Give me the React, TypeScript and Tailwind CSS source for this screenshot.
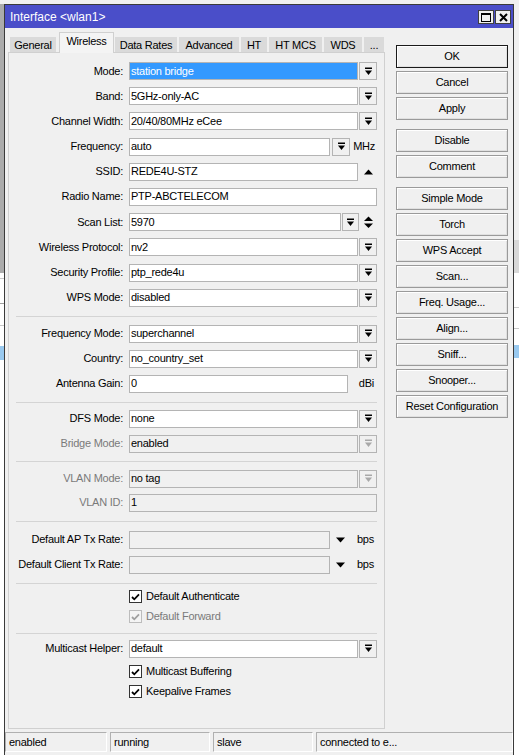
import React from 'react';

type Kind = 'select' | 'text' | 'freq' | 'ssid' | 'scan' | 'gain' | 'rate';

interface Field {
  label: string;
  value: string;
  kind: Kind;
  disabled?: boolean;
  selected?: boolean;
  mt?: string;
}

function DropIcon({ disabled }: { disabled?: boolean }) {
  const c = disabled ? '#a8a8a8' : '#000000';
  return (
    <svg width="9" height="9" viewBox="0 0 9 9">
      <rect x="1" y="0.5" width="7" height="1.5" fill={c} />
      <path d="M1 3.5h7L4.5 8z" fill={c} />
    </svg>
  );
}

function DropButton({ disabled, w = 'w-[18px]' }: { disabled?: boolean; w?: string }) {
  return (
    <div className={`${w} flex h-full shrink-0 items-center justify-center border border-[#b4b4b4] bg-[#f0f0f0]`}>
      <DropIcon disabled={disabled} />
    </div>
  );
}

function Input({ value, w, disabled, selected }: { value: string; w: string; disabled?: boolean; selected?: boolean }) {
  return (
    <div className={`${w} flex h-full shrink-0 border border-[#b4b4b4] ${disabled ? 'bg-[#f0f0f0]' : 'bg-white'}`}>
      <div className={`flex flex-1 items-center pl-[1px] ${selected ? 'bg-[#3399ff] text-white' : 'text-black'}`}>
        {value}
      </div>
    </div>
  );
}

function Label({ text, disabled }: { text: string; disabled?: boolean }) {
  return (
    <div className={`w-[114px] shrink-0 text-right ${disabled ? 'text-[#7a7a7a]' : 'text-black'}`}>
      {text}
    </div>
  );
}

function Row({ f }: { f: Field }) {
  let body: React.ReactNode;
  switch (f.kind) {
    case 'select':
      body = (
        <>
          <Input value={f.value} w="w-[229px]" disabled={f.disabled} selected={f.selected} />
          <div className="ml-[1px]" />
          <DropButton disabled={f.disabled} />
        </>
      );
      break;
    case 'text':
      body = <Input value={f.value} w="w-[248px]" disabled={f.disabled} />;
      break;
    case 'freq':
      body = (
        <>
          <Input value={f.value} w="w-[201px]" />
          <div className="ml-[2px]" />
          <DropButton />
          <div className="flex-1 pr-[2px] text-right">MHz</div>
        </>
      );
      break;
    case 'ssid':
      body = (
        <>
          <Input value={f.value} w="w-[229px]" />
          <div className="flex flex-1 items-center justify-center pl-[1px]">
            <svg width="9" height="6" viewBox="0 0 9 6">
              <path d="M0 5.5h9L4.5 0.5z" fill="#000" />
            </svg>
          </div>
        </>
      );
      break;
    case 'scan':
      body = (
        <>
          <Input value={f.value} w="w-[212px]" />
          <div className="ml-[1px]" />
          <DropButton w="w-[17px]" />
          <div className="flex flex-1 items-center justify-center pl-[1px]">
            <svg width="9" height="13" viewBox="0 0 9 13">
              <path d="M0 5h9L4.5 0.5z" fill="#000" />
              <path d="M0 7.5h9L4.5 12z" fill="#000" />
            </svg>
          </div>
        </>
      );
      break;
    case 'gain':
      body = (
        <>
          <Input value={f.value} w="w-[219px]" />
          <div className="flex-1 pr-[3px] text-right">dBi</div>
        </>
      );
      break;
    case 'rate':
      body = (
        <>
          <Input value={f.value} w="w-[201px]" disabled />
          <div className="flex w-[20px] items-center justify-center">
            <svg width="9" height="6" viewBox="0 0 9 6">
              <path d="M0 0.5h9L4.5 5.5z" fill="#000" />
            </svg>
          </div>
          <div className="flex-1 pr-[3px] text-right">bps</div>
        </>
      );
      break;
  }
  return (
    <div className={`flex h-[18px] items-center ${f.mt ?? ''}`}>
      <Label text={f.label} disabled={f.disabled} />
      <div className="ml-[6px] flex h-full w-[248px] items-center">{body}</div>
    </div>
  );
}

function Check({ label, disabled, mt }: { label: string; disabled?: boolean; mt: string }) {
  return (
    <div className={`flex h-[18px] items-center pl-[120px] ${mt}`}>
      <div
        className={`flex h-[13px] w-[13px] items-center justify-center border ${
          disabled ? 'border-[#bcbcbc] bg-[#f4f4f4]' : 'border-[#333333] bg-white'
        }`}
      >
        <svg width="9" height="8" viewBox="0 0 9 8">
          <path d="M1 4l2.3 2.3L8 1.3" fill="none" stroke={disabled ? '#a0a0a0' : '#000'} strokeWidth="1.8" />
        </svg>
      </div>
      <span className={`ml-[4px] ${disabled ? 'text-[#7a7a7a]' : 'text-black'}`}>{label}</span>
    </div>
  );
}

function Divider({ mt }: { mt: string }) {
  return <div className={`mx-[7px] h-px shrink-0 bg-[#d4d4d4] ${mt}`} />;
}

const section1: Field[] = [
  { label: 'Mode:', value: 'station bridge', kind: 'select', selected: true },
  { label: 'Band:', value: '5GHz-only-AC', kind: 'select' },
  { label: 'Channel Width:', value: '20/40/80MHz eCee', kind: 'select' },
  { label: 'Frequency:', value: 'auto', kind: 'freq' },
  { label: 'SSID:', value: 'REDE4U-STZ', kind: 'ssid' },
  { label: 'Radio Name:', value: 'PTP-ABCTELECOM', kind: 'text' },
  { label: 'Scan List:', value: '5970', kind: 'scan' },
  { label: 'Wireless Protocol:', value: 'nv2', kind: 'select' },
  { label: 'Security Profile:', value: 'ptp_rede4u', kind: 'select' },
  { label: 'WPS Mode:', value: 'disabled', kind: 'select' },
];

const tabs = ['General', 'Wireless', 'Data Rates', 'Advanced', 'HT', 'HT MCS', 'WDS', '...'];
const tabWidths = ['w-[46px]', 'w-[55px]', 'w-[62px]', 'w-[60px]', 'w-[26px]', 'w-[53px]', 'w-[38px]', 'w-[20px]'];

const buttonGroups = [
  ['OK', 'Cancel', 'Apply'],
  ['Disable', 'Comment'],
  ['Simple Mode', 'Torch', 'WPS Accept', 'Scan...', 'Freq. Usage...', 'Align...', 'Sniff...', 'Snooper...', 'Reset Configuration'],
];

const statusCells = [
  { text: 'enabled', w: 'w-[102px]' },
  { text: 'running', w: 'w-[100px]' },
  { text: 'slave', w: 'w-[100px]' },
  { text: 'connected to e...', w: 'w-[197px]' },
];

export default function App() {
  return (
    <div className="flex h-[755px] w-[519px] overflow-hidden bg-[#f0f0f0] font-['Liberation_Sans',Arial,sans-serif] text-[11px] leading-none tracking-[-0.25px] text-black">
      {/* window behind, left edge */}
      <div className="flex w-[4px] shrink-0 flex-col">
        <div className="h-[4px] bg-[#f0f0f0]" />
        <div className="h-[269px] bg-[#ababab]" />
        <div className="h-[5px] bg-white" />
        <div className="h-px bg-[#c8c8c8]" />
        <div className="h-[24px] bg-white" />
        <div className="h-px bg-[#a0a0a0]" />
        <div className="h-[21px] bg-white" />
        <div className="h-px bg-[#c8c8c8]" />
        <div className="h-[20px] bg-white" />
        <div className="h-[14px] bg-[#99c9ef]" />
        <div className="flex-1 bg-white" />
      </div>

      {/* dialog */}
      <div className="mt-[4px] flex w-[510px] shrink-0 flex-col border-x border-t border-[#3a3a3a] bg-[#f0f0f0]">
        <div className="flex h-[23px] shrink-0 items-center bg-[#4a4ec9] pl-[5px] pr-[2px] text-[12px] tracking-normal text-white">
          <span>Interface &lt;wlan1&gt;</span>
          <div className="ml-auto flex gap-[1px] pt-[1px]">
            <div className="flex h-[14px] w-[16px] items-center justify-center border border-[#404040] bg-[#f0f0f0]">
              <div className="h-[9px] w-[10px] border border-t-2 border-black" />
            </div>
            <div className="flex h-[14px] w-[16px] items-center justify-center border border-[#404040] bg-[#f0f0f0]">
              <svg width="9" height="9" viewBox="0 0 9 9">
                <path d="M1 1l7 7M8 1l-7 7" stroke="#000" strokeWidth="2" />
              </svg>
            </div>
          </div>
        </div>

        <div className="flex pl-[3px]">
          <div className="flex w-[377px] shrink-0 flex-col pt-[4px]">
            {/* tabs */}
            <div className="flex h-[20px] items-end pl-[2px]">
              {tabs.map((t, i) => {
                const active = t === 'Wireless';
                return (
                  <div
                    key={t}
                    className={`${tabWidths[i]} flex shrink-0 items-center justify-center ${
                      active
                        ? 'relative z-10 -mb-px h-[21px] border border-b-0 border-[#d0d0d0] bg-[#f4f4f4] pb-[3px]'
                        : 'mr-[2px] h-[15px] bg-[#dadada] pt-[1px]'
                    } ${i === 1 ? 'mx-[1px] mr-[1px]' : ''}`}
                  >
                    {t}
                  </div>
                );
              })}
            </div>

            {/* panel */}
            <div className="flex h-[677px] flex-col border border-[#d0d0d0] pt-[9px]">
              <div className="flex flex-col gap-[7.2px]">
                {section1.map((f) => (
                  <Row key={f.label} f={f} />
                ))}
              </div>
              <Divider mt="mt-[9px]" />
              <Row f={{ label: 'Frequency Mode:', value: 'superchannel', kind: 'select', mt: 'mt-[8px]' }} />
              <Row f={{ label: 'Country:', value: 'no_country_set', kind: 'select', mt: 'mt-[7px]' }} />
              <Row f={{ label: 'Antenna Gain:', value: '0', kind: 'gain', mt: 'mt-[7px]' }} />
              <Divider mt="mt-[9px]" />
              <Row f={{ label: 'DFS Mode:', value: 'none', kind: 'select', mt: 'mt-[7px]' }} />
              <Row f={{ label: 'Bridge Mode:', value: 'enabled', kind: 'select', disabled: true, mt: 'mt-[7px]' }} />
              <Divider mt="mt-[8px]" />
              <Row f={{ label: 'VLAN Mode:', value: 'no tag', kind: 'select', disabled: true, mt: 'mt-[8px]' }} />
              <Row f={{ label: 'VLAN ID:', value: '1', kind: 'text', disabled: true, mt: 'mt-[6px]' }} />
              <Divider mt="mt-[9px]" />
              <Row f={{ label: 'Default AP Tx Rate:', value: '', kind: 'rate', mt: 'mt-[9px]' }} />
              <Row f={{ label: 'Default Client Tx Rate:', value: '', kind: 'rate', mt: 'mt-[7px]' }} />
              <Divider mt="mt-[9px]" />
              <Check label="Default Authenticate" mt="mt-[4px]" />
              <Check label="Default Forward" disabled mt="mt-[2px]" />
              <Divider mt="mt-[7px]" />
              <Row f={{ label: 'Multicast Helper:', value: 'default', kind: 'select', mt: 'mt-[6px]' }} />
              <Check label="Multicast Buffering" mt="mt-[5px]" />
              <Check label="Keepalive Frames" mt="mt-[2px]" />
            </div>
          </div>

          {/* buttons */}
          <div className="ml-[11px] flex w-[112px] shrink-0 flex-col pt-[17px]">
            {buttonGroups.map((g, gi) => (
              <div key={gi} className={`flex flex-col gap-[3px] ${gi > 0 ? 'mt-[9px]' : ''}`}>
                {g.map((b) => (
                  <div
                    key={b}
                    className={`flex h-[23px] items-center justify-center border bg-[#f0f0f0] shadow-[inset_1px_1px_0_#ffffff,inset_-1px_-1px_0_#e0e0e0] ${
                      b === 'OK' ? 'border-[#1a1a1a]' : 'border-[#9a9a9a]'
                    }`}
                  >
                    {b}
                  </div>
                ))}
              </div>
            ))}
          </div>
        </div>

        {/* status bar */}
        <div className="mt-[3px] flex gap-[3px]">
          {statusCells.map((c) => (
            <div
              key={c.text}
              className={`${c.w} flex h-[20px] shrink-0 items-center overflow-hidden whitespace-nowrap border border-[#b0b0b0] border-b-white border-r-white pl-[3px]`}
            >
              {c.text}
            </div>
          ))}
        </div>
      </div>

      {/* window behind, right edge */}
      <div className="flex w-[5px] shrink-0 flex-col">
        <div className="h-[240px] bg-[#f0f0f0]" />
        <div className="h-[33px] bg-[#d8d8d8]" />
        <div className="h-[34px] bg-white" />
        <div className="h-px bg-[#c8c8c8]" />
        <div className="h-[20px] bg-white" />
        <div className="h-px bg-[#c8c8c8]" />
        <div className="h-[16px] bg-white" />
        <div className="h-[13px] bg-[#99c9ef]" />
        <div className="flex-1 bg-white" />
      </div>
    </div>
  );
}
